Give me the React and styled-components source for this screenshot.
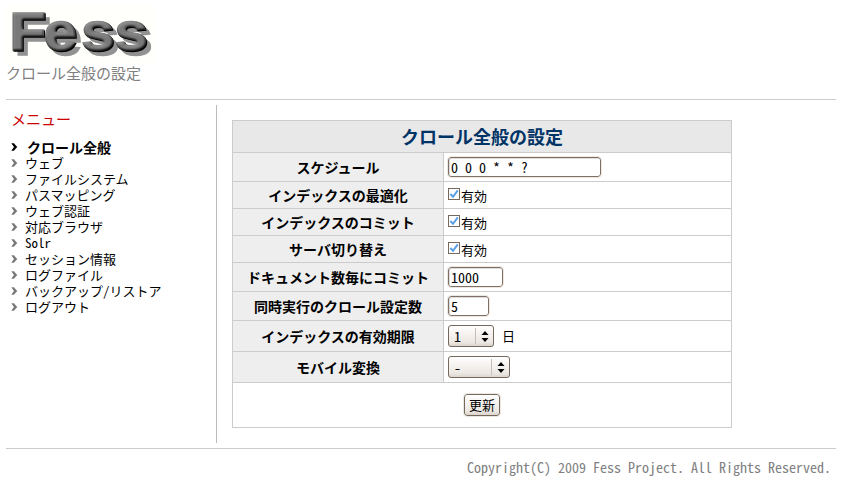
import React from 'react';
import styled, { createGlobalStyle, css } from 'styled-components';

const Global = createGlobalStyle`
  * { box-sizing: border-box; }
  body { margin: 0; background: #fff; color: #000; overflow: hidden;
    font-family: "Noto Sans CJK JP", sans-serif; font-size: 13px; font-feature-settings: "hwid"; }
`;
const Page = styled.div`width: 830px; height: 492px; margin-left: 6px; padding-top: 5px;`;
const Header = styled.header`height: 95px; border-bottom: 1px solid #ccc;`;
const Logo = styled.svg`display: block; width: 149px; height: 58px; background: #fffffb; overflow: visible;`;
const Subtitle = styled.h1`margin: 0; font-size: 15px; line-height: 20px; font-weight: 400; color: #808080; white-space: nowrap;`;
const Body = styled.div`display: flex; height: 349px; padding: 5px 0; border-bottom: 1px solid #ccc;`;
const Sidebar = styled.nav`width: 211px; padding: 3px 0 0 5px; border-right: 1px solid #bbb;`;
const MenuTitle = styled.h2`margin: 0 0 9px; font-size: 15px; line-height: 22px; font-weight: 400; color: #c00;`;
const MenuList = styled.ul`margin: 0; padding: 0; list-style: none;`;
const MenuItem = styled.li`
  display: flex; align-items: center; height: 16px; line-height: 16px; white-space: nowrap; gap: 7px;
  svg { width: 7px; height: 8px; color: #777; }
  ${p => p.$active && css`font-weight: 700; font-size: 14px; line-height: 14px; padding-bottom: 1px; gap: 9px; svg { color: #000; }`}
`;
const Content = styled.main`padding: 15px 0 0 15px;`;
const Panel = styled.form`width: 500px; margin: 0; border: 1px solid #ccc; border-bottom: 0;`;
const PanelTitle = styled.h2`
  margin: 0; height: 32px; line-height: 31px; border-bottom: 1px solid #ccc; background: #e8e8e8;
  color: #036; font-size: 18px; font-weight: 700; text-align: center;
`;
const Row = styled.div`display: grid; grid-template-columns: 211px 1fr; height: ${p => p.$h}px; border-bottom: 1px solid #ccc;`;
const Label = styled.div`
  display: flex; align-items: center; justify-content: center; padding-bottom: 1px; background: #eee;
  border-right: 1px solid #ccc; font-size: 14px; line-height: 20px; font-weight: 700; white-space: nowrap;
`;
const Value = styled.div`display: flex; align-items: center; padding-left: 4px;`;
const Input = styled.input`
  width: ${p => p.$w}px; height: 20px; padding: 0 2px; border: 1px solid #806f64; border-radius: 3px; outline: 1px solid #ece7e1;
  background: #fff; font: inherit; font-size: 14px; font-feature-settings: inherit; color: #000;
  box-shadow: inset 1px 1px 0 #ddd;
`;
const CheckLabel = styled.label`
  display: flex; align-items: flex-start; gap: 1px; height: 18px; line-height: 20px;
  svg { width: 12px; height: 12px; margin-top: 2px; }
`;
const Select = styled.div`
  display: flex; align-items: center; justify-content: space-between; width: ${p => p.$w}px; height: 22px;
  padding-left: 5px; border: 1px solid #75685c; border-radius: 3px; font-size: 14px; line-height: 18px;
  background: linear-gradient(#fff, #f4f1ee 45%, #ece8e3 80%, #ddd5ce);
`;
const Arrows = styled.span`
  display: flex; align-items: center; justify-content: center; width: 18px; height: 16px; border-left: 1px solid #c5beb7;
  svg { width: 8px; height: 11px; }
`;
const Unit = styled.span`margin-left: 8px; line-height: 18px; padding-bottom: 1px;`;
const Actions = styled.div`display: flex; justify-content: center; height: 45px; padding-top: 11px; border-bottom: 1px solid #ccc;`;
const Button = styled.button`
  width: 36px; height: 22px; padding: 0; border: 1px solid #75685c; border-radius: 3px; outline: 1px solid #ece7e1;
  background: linear-gradient(#fff, #f4f1ee 45%, #ece8e3 80%, #ddd5ce); font: inherit; line-height: 20px; color: #000;
`;
const Footer = styled.footer`padding: 8px 5px 0 0; text-align: right; font-size: 14px; line-height: 20px; color: #808080; white-space: pre;`;

const FessLogo = () => (
  <Logo viewBox="0 0 149 58" aria-label="Fess">
    <defs>
      <filter id="bevel" filterUnits="userSpaceOnUse" x="0" y="0" width="149" height="58" colorInterpolationFilters="sRGB">
        <feOffset in="SourceAlpha" dx="5" dy="4.5" result="off" />
        <feFlood floodColor="#929292" />
        <feComposite in2="off" operator="in" result="shadow" />
        <feGaussianBlur in="SourceAlpha" stdDeviation="0.8" result="soft" />
        <feDiffuseLighting in="soft" surfaceScale="1.9" diffuseConstant="0.56" lightingColor="#fff" result="lit">
          <feDistantLight azimuth="240" elevation="58" />
        </feDiffuseLighting>
        <feComposite in="lit" in2="SourceAlpha" operator="in" result="face" />
        <feOffset in="SourceAlpha" dx="0.6" dy="0.6" result="edge" />
        <feMerge><feMergeNode in="shadow" /><feMergeNode in="edge" /><feMergeNode in="face" /></feMerge>
      </filter>
    </defs>
    <g filter="url(#bevel)">
      <text transform="scale(1.14 1)" x="2.9 32.8 65.7 95" y="45.4" fontFamily="Liberation Sans" fontWeight="700" fontSize="53" stroke="#777" strokeWidth="1.4" fill="#777">Fess</text>
    </g>
  </Logo>
);
const Chevron = () => <svg viewBox="0 0 7 8"><path d="M0.3 0.3h2.6L6.2 4 2.9 7.7H.3L3 4z" fill="currentColor" /></svg>;
const Check = () => (
  <CheckLabel>
    <svg viewBox="0 0 12 12"><rect x=".5" y=".5" width="11" height="11" fill="#fff" stroke="#75685c" /><path d="M2.3 6 5 8.8 9.8 2.3" fill="none" stroke="#5aa0e6" strokeWidth="2" /></svg>
    有効
  </CheckLabel>
);
const Picker = ({ w, children }) => (
  <Select $w={w}>{children}<Arrows><svg viewBox="0 0 8 11"><path d="M4 0 7.5 4h-7zM4 11 .5 7h7z" /></svg></Arrows></Select>
);

const menu = ['クロール全般', 'ウェブ', 'ファイルシステム', 'パスマッピング', 'ウェブ認証', '対応ブラウザ', 'Solr', 'セッション情報', 'ログファイル', 'バックアップ/リストア', 'ログアウト'];
const rows = [
  ['スケジュール', 29, <Input $w={153} defaultValue="0 0 0 * * ?" />],
  ['インデックスの最適化', 27, <Check />],
  ['インデックスのコミット', 27, <Check />],
  ['サーバ切り替え', 27, <Check />],
  ['ドキュメント数毎にコミット', 29, <Input $w={55} defaultValue="1000" />],
  ['同時実行のクロール設定数', 29, <Input $w={41} defaultValue="5" />],
  ['インデックスの有効期限', 31, <><Picker w={46}>1</Picker><Unit>日</Unit></>],
  ['モバイル変換', 31, <Picker w={62}>-</Picker>],
];

export default function App() {
  return (
    <Page>
      <Global />
      <Header><FessLogo /><Subtitle>クロール全般の設定</Subtitle></Header>
      <Body>
        <Sidebar>
          <MenuTitle>メニュー</MenuTitle>
          <MenuList>{menu.map((m, i) => <MenuItem key={m} $active={i === 0}><Chevron />{m}</MenuItem>)}</MenuList>
        </Sidebar>
        <Content>
          <Panel>
            <PanelTitle>クロール全般の設定</PanelTitle>
            {rows.map(([label, h, field]) => <Row key={label} $h={h}><Label>{label}</Label><Value>{field}</Value></Row>)}
            <Actions><Button type="button">更新</Button></Actions>
          </Panel>
        </Content>
      </Body>
      <Footer>Copyright(C) 2009 Fess Project. All Rights Reserved.</Footer>
    </Page>
  );
}
